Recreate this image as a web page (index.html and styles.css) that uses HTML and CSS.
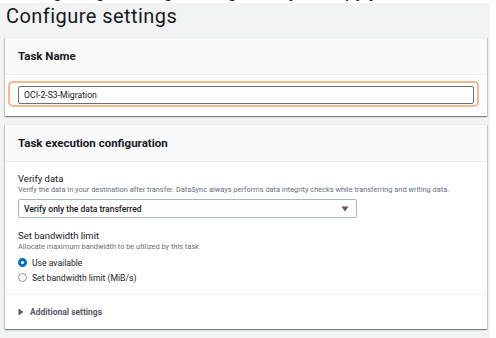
FILE: index.html
```html
<!DOCTYPE html>
<html>
<head>
<meta charset="utf-8">
<link rel="stylesheet" href="styles.css">
</head>
<body>
<div class="topstrip"><span class="cut">Configuring the migration gateway to copy your data</span></div>
<main class="page">
  <h1 class="title">Configure settings</h1>
  <section class="card">
    <div class="card-header"><h2 class="card-title">Task Name</h2></div>
    <div class="name-body">
      <div class="focus-ring"><div class="text-input">OCI-2-S3-Migration</div></div>
    </div>
  </section>
  <section class="card card-exec">
    <div class="card-header"><h2 class="card-title">Task execution configuration</h2></div>
    <div class="exec-body">
      <div class="field">
        <div class="label">Verify data</div>
        <div class="desc">Verify the data in your destination after transfer. DataSync always performs data integrity checks while transferring and writing data.</div>
        <div class="select">
          <span>Verify only the data transferred</span>
          <svg class="caret" width="8" height="6" viewBox="0 0 8 6"><path d="M0.5 0.5 H7.5 L4 5.5 Z" fill="#545b64"/></svg>
        </div>
      </div>
      <div class="field field-bw">
        <div class="label">Set bandwidth limit</div>
        <div class="desc">Allocate maximum bandwidth to be utilized by this task</div>
        <div class="radio-row"><span class="radio radio-on"></span><span class="radio-label">Use available</span></div>
        <div class="radio-row"><span class="radio"></span><span class="radio-label">Set bandwidth limit (MiB/s)</span></div>
      </div>
    </div>
    <div class="card-footer">
      <svg class="tri" width="6" height="8" viewBox="0 0 6 8"><path d="M0.5 0.5 L5.5 4 L0.5 7.5 Z" fill="#545b64"/></svg>
      <span class="footer-label">Additional settings</span>
    </div>
  </section>
</main>
</body>
</html>
```
FILE: styles.css
```css
* { box-sizing: border-box; }
html, body { margin: 0; padding: 0; background: #ffffff; }
body { font-family: Roboto, "Open Sans", sans-serif; color: #16191f; width: 496px; height: 338px; overflow: hidden; }

.topstrip { height: 3px; overflow: hidden; width: 490px; background: #ffffff; }
.cut { display: block; height: 20px; font-size: 19px; line-height: 19px; margin-top: -19px; padding-left: 8px; white-space: nowrap; color: #16191f; }

.page { width: 490px; height: 335px; background: #f2f3f3; padding: 0 3px 0 5px; }
.title { margin: 0; padding: 0 0 0 1px; height: 34px; font-size: 20px; letter-spacing: 0.45px; line-height: 26px; font-weight: 400; color: #16191f; }

.card { background: #ffffff; width: 482px; box-shadow: 0 1px 1px 0 rgba(0,28,36,0.3), 1px 1px 1px 0 rgba(0,28,36,0.15), -1px 1px 1px 0 rgba(0,28,36,0.15); border-top: 1px solid #eaeded; }
.card-header { height: 37px; background: #fafafa; border-bottom: 1px solid #eaeded; display: flex; align-items: center; padding: 0 13px; }
.card-title { margin: 0; font-size: 11.5px; font-weight: 700; color: #16191f; }

.name-body { height: 41px; padding: 6px 0 0 3px; }
.focus-ring { width: 471px; height: 26px; border: 2px solid #f6b690; border-radius: 5px; padding: 3px 3px 0 8px; }
.text-input { width: 456px; height: 18px; border: 1px solid #687078; border-radius: 2px; font-size: 8.7px; line-height: 16px; padding-left: 5px; color: #16191f; }

.card-exec { margin-top: 8px; }
.exec-body { padding: 11px 13px 0 13px; height: 133px; border-bottom: 1px solid #f2f3f3; }
.label { font-size: 9.5px; line-height: 12px; color: #16191f; }
.desc { font-size: 7.4px; line-height: 10px; color: #687078; white-space: nowrap; }
.select { margin-top: 4px; width: 339px; height: 19px; border: 1px solid #aab7b8; border-radius: 2px; display: flex; align-items: center; justify-content: space-between; padding: 0 7px 0 5px; font-size: 8.5px; font-weight: 500; color: #16191f; }
.caret { display: block; }

.field-bw { margin-top: 12px; }
.radio-row { display: flex; align-items: center; height: 15px; }
.field-bw .desc { margin-bottom: 3px; }
.radio { width: 9px; height: 9px; border-radius: 50%; border: 1px solid #879596; margin: 0 5px 0 0; flex: none; background: #fff; }
.radio-on { border: 3px solid #0073bb; }
.radio-label { font-size: 8.6px; color: #16191f; }

.card-footer { height: 34px; display: flex; align-items: center; padding: 0 13px; }
.tri { display: block; margin-right: 6px; }
.footer-label { font-size: 8.5px; font-weight: 700; color: #545b64; }
```
